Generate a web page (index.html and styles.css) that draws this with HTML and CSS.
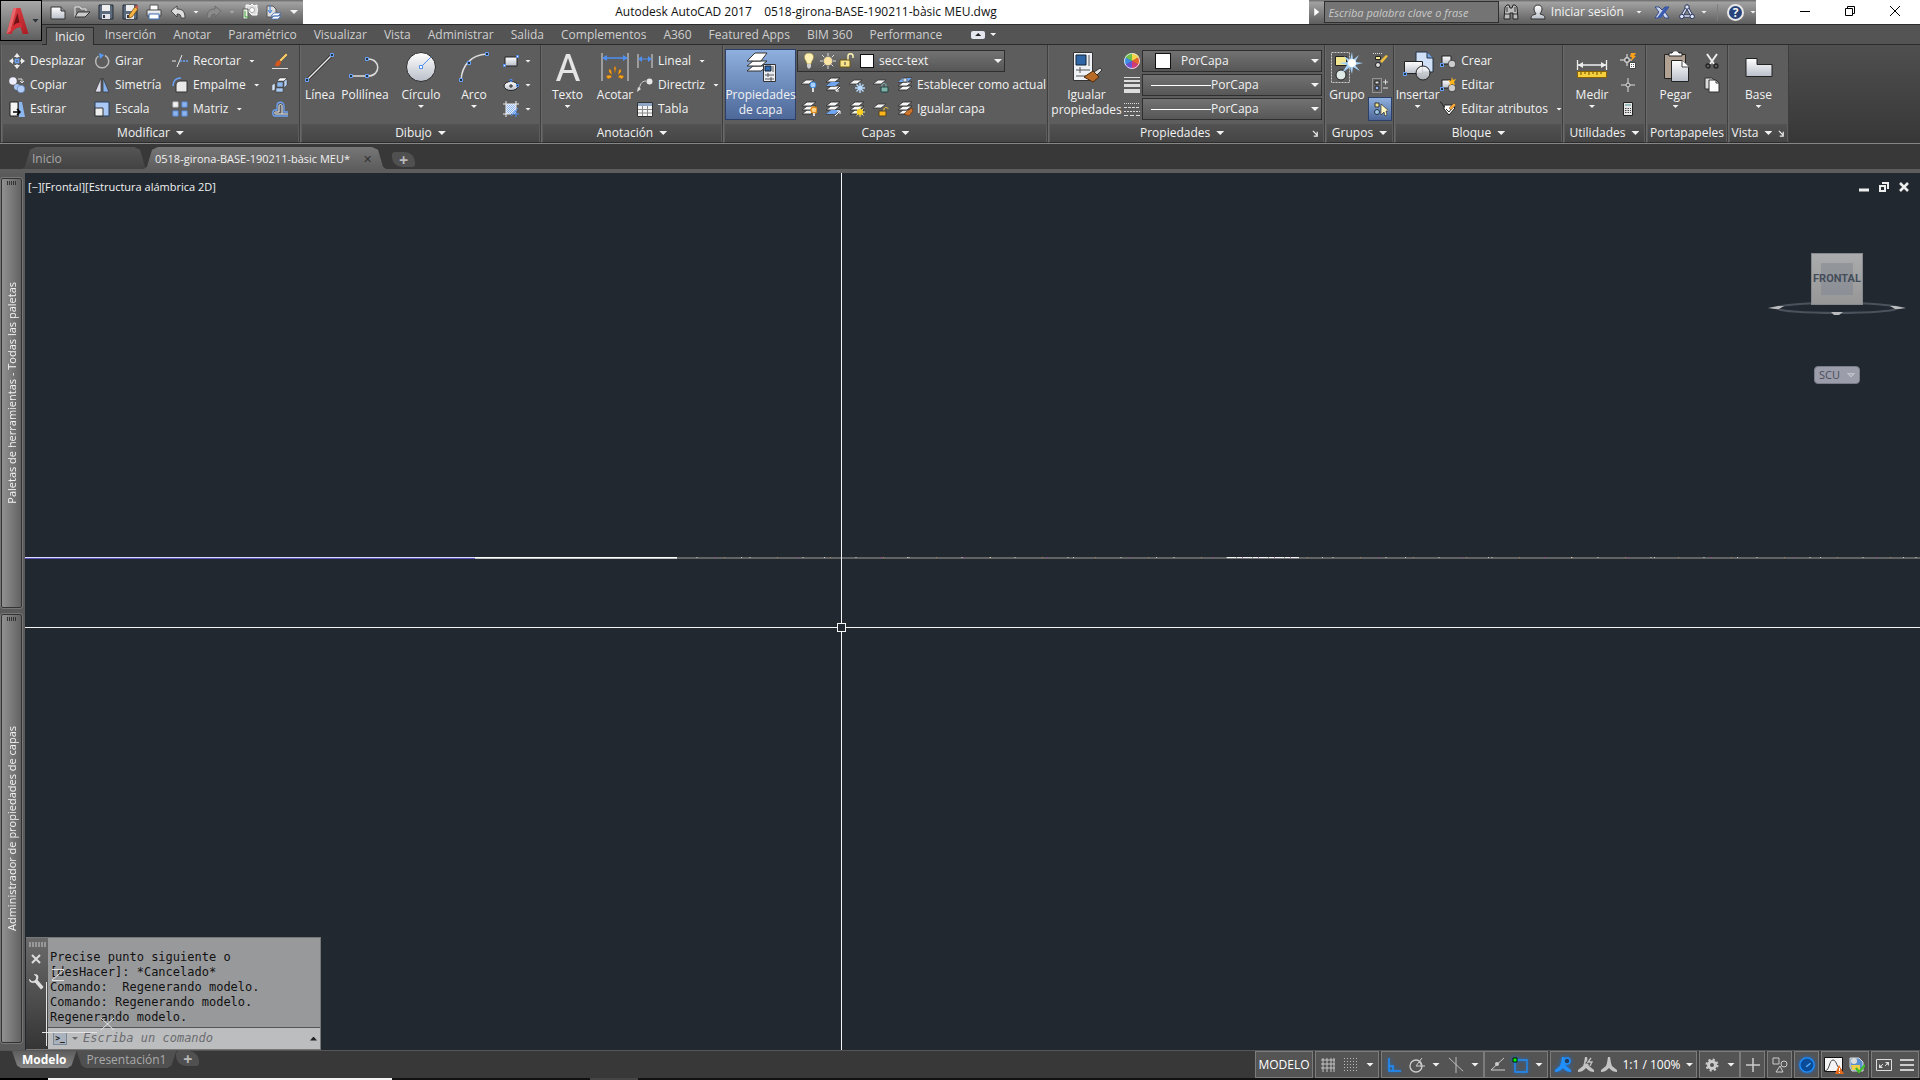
FILE: index.html
```html
<!DOCTYPE html>
<html lang="es">
<head>
<meta charset="utf-8">
<title>Autodesk AutoCAD 2017 - 0518-girona-BASE-190211-bàsic MEU.dwg</title>
<link rel="stylesheet" href="styles.css">
</head>
<body>
<svg class="sprite" aria-hidden="true">
  <defs>
    <linearGradient id="silver" x1="0" y1="0" x2="0" y2="1"><stop offset="0" stop-color="#fff"/><stop offset="1" stop-color="#b9bfc9"/></linearGradient>
    <linearGradient id="red" x1="0" y1="0" x2="1" y2="1"><stop offset="0" stop-color="#e8434a"/><stop offset="1" stop-color="#a81d22"/></linearGradient>
    <pattern id="hatch" width="2" height="2" patternUnits="userSpaceOnUse"><rect width="2" height="2" fill="#e8f0fc"/><path d="M0 0l2 2" stroke="#6f9fe8" stroke-width=".8"/></pattern>
  </defs>
  <symbol id="logo" viewBox="0 0 24 28"><path d="M8 1h7l8 26h-6l-2-7c-4 0-7 2-9 7H1L8 1z" fill="url(#red)"/><path d="M12 6l-5 15c2-3 5-5 7-5L12 6z" fill="#6e1216"/><path d="M8 1h3L5 24l-4 3L8 1z" fill="#f1797c" opacity=".7"/><path d="M6 20c4-4 7-5 9-4l2 4c-4 0-8 1-11 5z" fill="#d22d34"/></symbol>
  <symbol id="new" viewBox="0 0 16 16"><path d="M1 3h10l4 4v8H1z" fill="url(#silver)" stroke="#333"/><path d="M11 3v4h4" fill="#999" stroke="#333"/></symbol>
  <symbol id="open" viewBox="0 0 16 16"><path d="M1 13V3h5l1 2h5v2" fill="#777" stroke="#e8e8e8"/><path d="M1 13L4 8h12l-5 5z" fill="#ccc" stroke="#333"/></symbol>
  <symbol id="save" viewBox="0 0 16 16"><path d="M1 1h14v14H1z" fill="#5b6a7c" stroke="#242c36"/><path d="M4 1h8v6H4z" fill="#eee"/><path d="M4 10h8v5H4z" fill="#dfe3e8"/><path d="M5 11h2v3H5z" fill="#334"/></symbol>
  <symbol id="saveas" viewBox="0 0 16 16"><use href="#save"/><path d="M7 11l6-8 3 2-6 8-3 1z" fill="#f4b545" stroke="#704400" stroke-width=".7"/><path d="M13 3l1-2 3 2-1 2z" fill="#d9534a"/></symbol>
  <symbol id="print" viewBox="0 0 16 16"><path d="M4 1h8v6H4z" fill="#fff" stroke="#555"/><path d="M1 6h14v6H1z" fill="url(#silver)" stroke="#444"/><path d="M3 10h10v5H3z" fill="#fff" stroke="#3e6fb5"/></symbol>
  <symbol id="undo" viewBox="0 0 16 16"><path d="M1 7l6-5v3c6 0 8 3 8 9h-4c0-3-1-4-4-4v3z" fill="#ddd" stroke="#333" stroke-width=".8"/></symbol>
  <symbol id="redo" viewBox="0 0 16 16"><path d="M15 7L9 2v3C3 5 1 8 1 14h4c0-3 1-4 4-4v3z" fill="#8b8b8b" stroke="#666" stroke-width=".8"/></symbol>
  <symbol id="sheets" viewBox="0 0 16 16"><path d="M4 1h3l1 1 2-2 2 2 3-1v3l1 2-1 2v3h-5l-2-2-4-4z" fill="#ddd" stroke="#fff"/><path d="M1 5h5v10H1z" fill="#e8f5e0" stroke="#5a5a5a"/><path d="M3 7v6h4" stroke="#3c9a3c" fill="none"/><circle cx="10" cy="6" r="2.500" fill="#fff" stroke="#aaa"/></symbol>
  <symbol id="layerqa" viewBox="0 0 16 16"><path d="M1 2h6l3 3v8H1z" fill="#ddd" stroke="#555"/><path d="M4 1v7m-2-2l2 3 2-3" stroke="#3f7edb" fill="none"/><path d="M8 9h7l-3 3H5zM8 12h7l-3 3H5z" fill="#fff" stroke="#3a6db8" stroke-width=".8"/></symbol>
  <symbol id="binoc" viewBox="0 0 16 16"><path d="M2 3l2-2h2l1 3h2l1-3h2l2 2 1 12h-5V9H7v6H1z" fill="#bbb" stroke="#222"/><path d="M2 10h5M9 10h5M4 3v5M12 3v5" stroke="#333"/></symbol>
  <symbol id="user" viewBox="0 0 16 16"><path d="M8 1c3 0 4 2 4 4 0 3-2 4-2 5 3 1 5 1 5 5H1c0-4 2-4 5-5 0-1-2-2-2-5 0-2 1-4 4-4z" fill="url(#silver)" stroke="#333"/></symbol>
  <symbol id="exch" viewBox="0 0 16 16"><path d="M1 3h4l3 3 3-3h4l-4 5 4 6h-4l-3-4-3 4H1l4-6z" fill="#cfd8ee" stroke="#334a86"/><path d="M11 3h4L7 14H3z" fill="#3b5bb0"/></symbol>
  <symbol id="a360" viewBox="0 0 16 16"><path d="M8 3l5 9H3z" fill="none" stroke="#27335c" stroke-width="3"/><path d="M8 3l5 9H3z" fill="none" stroke="#dfe5f5" stroke-width="1.500"/><g fill="#dfe5f5" stroke="#27335c"><circle cx="8" cy="3" r="2.200"/><circle cx="2.800" cy="12.500" r="2.200"/><circle cx="13.200" cy="12.500" r="2.200"/></g></symbol>
  <symbol id="layers" viewBox="0 0 16 16"><g fill="#f6f6f6" stroke="#2f2f2f" stroke-width=".9"><path d="M1 13l5-4h9l-5 4z"/><path d="M1 9l5-4h9l-5 4z"/><path d="M1 5l5-4h9l-5 4z"/></g></symbol>
  <symbol id="layer" viewBox="0 0 16 16"><path d="M0 7l5-4h8L8 7z" fill="#f6f6f6" stroke="#333" stroke-width=".8"/></symbol>
  <symbol id="move" viewBox="0 0 16 16"><path d="M8 0l3 4H5zM8 16l3-4H5zM0 8l4-3v6zM16 8l-4-3v6z" fill="#eee"/><path d="M8 3v2M8 11v2M3 8h2M11 8h2" stroke="#eee"/><path d="M6.500 6.500h3v3h-3z" fill="none" stroke="#6aa2f8" stroke-width="1.500"/></symbol>
  <symbol id="copy" viewBox="0 0 16 16"><circle cx="4" cy="4" r="3.800" fill="#eef"/><circle cx="8" cy="10" r="3" fill="#a8c6f4"/><circle cx="12" cy="12" r="3.800" fill="#b4cdf5" stroke="#4a74b4" stroke-width=".5"/><path d="M9 2h4v4m-2-2l2 2 2-2" fill="none" stroke="#ddd"/></symbol>
  <symbol id="stretch" viewBox="0 0 16 16"><path d="M10 1h3l3 15h-6z" fill="#8cb7ee"/><path d="M1 1h8v14H1z" fill="#f4f4f4" stroke="#222"/><path d="M4 11h7M8 8l3 3-3 3" stroke="#000" stroke-width="1.500" fill="none"/></symbol>
  <symbol id="rotate" viewBox="0 0 16 16"><path d="M11 2.500A6.500 6.500 0 1 1 4.500 3" fill="none" stroke="#b9b9b9" stroke-width="1.500"/><path d="M5 0l5 2-4 4" fill="#5a9af5"/></symbol>
  <symbol id="mirror" viewBox="0 0 16 16"><path d="M7 1v14H1z" fill="#dde" stroke="#333" stroke-width=".7"/><path d="M9 1v14h6z" fill="#84b1ee" stroke="#333" stroke-width=".7"/></symbol>
  <symbol id="scale" viewBox="0 0 16 16"><path d="M1 1h14v14H1z" fill="#a9c8f5" stroke="#28405f"/><path d="M1 7h8v8H1z" fill="#eee" stroke="#333"/></symbol>
  <symbol id="trim" viewBox="0 0 16 16"><path d="M0 8h4M5 14l5-12" stroke="#e8e8e8"/><path d="M8 8h2m1 0h2m1 0h2" stroke="#6aa2f8" stroke-width="1.300"/></symbol>
  <symbol id="fillet" viewBox="0 0 16 16"><path d="M4 15V9c0-4 2-5 5-5h6v11z" fill="#e9e9e9" stroke="#333"/><path d="M1 9c0-5 3-8 8-8" fill="none" stroke="#6aa2f8" stroke-width="1.600"/></symbol>
  <symbol id="array" viewBox="0 0 16 16"><path d="M1 1h5v5H1z" fill="#f4f4f4" stroke="#ccc"/><path d="M10 1h5v5h-5zM1 10h5v5H1zM10 10h5v5h-5z" fill="#8fb4ea" stroke="#5e93e6"/></symbol>
  <symbol id="brush" viewBox="0 0 16 16"><path d="M14 0l2 2-7 7-2-2z" fill="#f0c66a" stroke="#333" stroke-width=".5"/><path d="M7 7l2 2c0 4-3 5-6 4 1-3 1-5 4-6z" fill="#d4571b"/><path d="M0 15.500h16" stroke="#ddd"/></symbol>
  <symbol id="explode" viewBox="0 0 16 16"><g stroke="#333" stroke-width=".5"><path d="M5 4l3-3h7l-3 3z" fill="#fff"/><path d="M5 5h6v5H5z" fill="#8db8ee"/><path d="M12 4l3-2v6l-3 3z" fill="#b8d3f5"/><path d="M0 8l3-2v7l-3 1z" fill="#d8e6fa"/><path d="M4 11h7v4H4z" fill="#a9c9f2"/></g></symbol>
  <symbol id="offset" viewBox="0 0 16 16"><path d="M16 11h-4V5c0-5-7-5-7 0v4H3c-3 0-3 6 0 6h13" fill="none" stroke="#6aa2f8" stroke-width="1.300"/><path d="M16 13H4c-2 0-2-2 0-2h3V5c0-2 3-2 3 0v8" fill="none" stroke="#eee"/></symbol>
  <symbol id="line" viewBox="0 0 32 32"><path d="M3 29L28 4" stroke="#222" stroke-width="3"/><path d="M3 29L28 4" stroke="#eee" stroke-width="1.500"/><path d="M1.500 27.500h3v3h-3zM26.500 2.500h3v3h-3z" fill="#234" stroke="#6aa2f8"/></symbol>
  <symbol id="pline" viewBox="0 0 32 32"><path d="M2 25h17c13 0 13-17 0-17" fill="none" stroke="#ddd" stroke-width="1.500"/><path d="M.500 23.500h3v3h-3zM16.500 23.500h3v3h-3zM16.500 6.500h3v3h-3z" fill="#234" stroke="#6aa2f8"/></symbol>
  <symbol id="circle" viewBox="0 0 32 32"><circle cx="16" cy="16" r="14.500" fill="url(#silver)" stroke="#2a2a2a"/><path d="M16 16L26 6" stroke="#4f8ff0"/><path d="M14.500 14.500h3v3h-3z" fill="#fff" stroke="#4f8ff0"/></symbol>
  <symbol id="arc" viewBox="0 0 32 32"><path d="M3 29C4 15 12 4 29 3" fill="none" stroke="#ddd" stroke-width="1.500"/><path d="M1.500 27.500h3v3h-3zM9.500 10.500h3v3h-3zM27.500 1.500h3v3h-3z" fill="#234" stroke="#6aa2f8"/></symbol>
  <symbol id="rect" viewBox="0 0 16 16"><path d="M2 4h12v9H2z" fill="url(#silver)" stroke="#222"/><path d="M.500 11.500h2v2h-2zM13.500 2.500h2v2h-2z" fill="#fff" stroke="#4f8ff0"/></symbol>
  <symbol id="ellipse" viewBox="0 0 16 16"><ellipse cx="8" cy="9" rx="7" ry="4.500" fill="url(#silver)" stroke="#222"/><path d="M6 9h4M8 7v4" stroke="#222"/><path d="M7 2.500h2v2H7zM13.500 7.500h2v2h-2z" fill="#234" stroke="#4f8ff0"/></symbol>
  <symbol id="hatchi" viewBox="0 0 16 16"><path d="M3 3h10v10H3z" fill="url(#hatch)"/><path d="M3 0v16M13 0v10M0 3h16M0 13h8" stroke="#eee"/><path d="M8 15l7-8M13 10v6M10 13h6" stroke="#4f8ff0"/></symbol>
  <symbol id="text" viewBox="0 0 32 32"><path d="M4 30L14 3h4l10 27h-4l-3-8H11l-3 8zm8-11h8L16 7z" fill="#e4e4e4"/></symbol>
  <symbol id="dim" viewBox="0 0 32 32"><path d="M3 2v28M29 2v28" stroke="#ddd"/><path d="M4 7h24" stroke="#4f8ff0" stroke-width="1.500"/><path d="M3 7l5-3v6zM29 7l-5-3v6z" fill="#4f8ff0"/><g fill="#f7a51c" stroke="#a95a00" stroke-width=".4"><path d="M15 17l1-2 1 2-1 5zM10 18l2 1 1 5-3-3zM22 18l-2 1-1 5 3-3zM7 25l4-1 2 2-4 2zM25 25l-4-1-2 2 4 2z"/></g></symbol>
  <symbol id="linear" viewBox="0 0 16 16"><path d="M1 1v14M15 1v14" stroke="#ddd"/><path d="M2 6h12" stroke="#4f8ff0"/><path d="M1 6l4-3v6zM15 6l-4-3v6z" fill="#4f8ff0"/></symbol>
  <symbol id="leader" viewBox="0 0 16 16"><path d="M2 13C3 8 4 4 9 4" fill="none" stroke="#ccc"/><path d="M0 15l1-5 3 2z" fill="#ddd"/><circle cx="12.500" cy="4.500" r="3" fill="#e8e8e8"/></symbol>
  <symbol id="table" viewBox="0 0 16 16"><path d="M.500 1.500h15v14H.500z" fill="#f4f4f4" stroke="#333"/><path d="M1 2h14v3H1z" fill="#8fa7c4"/><path d="M1 8.500h14M1 12h14M5.500 5v10M10.500 5v10" stroke="#888"/></symbol>
  <symbol id="layerprop" viewBox="0 0 32 32"><g fill="#fff" stroke="#333"><path d="M2 20l6-5h14l-6 5z"/><path d="M2 15l6-5h14l-6 5z"/><path d="M2 10l8-8h12l-6 8z"/></g><path d="M18.500 13.500h12v17h-12z" fill="#e9edf3" stroke="#333"/><path d="M20 15h6v5h-6z" fill="#3168b0" stroke="#123"/><path d="M28 15v6M20 24h9M20 28h9M23 22v4M26 26v4" stroke="#555"/></symbol>
  <symbol id="bulb" viewBox="0 0 16 16"><path d="M8 0c6 0 5 6 3 8l-1 3H6L5 8C3 6 2 0 8 0z" fill="#fdf0b4" stroke="#9a8438" stroke-width=".6"/><path d="M6 11h4v3l-2 2-2-2z" fill="#ccc"/></symbol>
  <symbol id="sun" viewBox="0 0 16 16"><path d="M8 0v16M0 8h16M2 2l12 12M14 2L2 14" stroke="#ddd" stroke-dasharray="3 10 3 10"/><circle cx="8" cy="8" r="4.500" fill="#fbe4a4" stroke="#777" stroke-width=".5"/></symbol>
  <symbol id="unlock" viewBox="0 0 16 16"><path d="M9 7V3c0-3 5-3 5 0v2" fill="none" stroke="#fff3b5" stroke-width="1.500"/><path d="M1 7h10v7H1z" fill="#f9e48e" stroke="#6d5a10"/><path d="M6 9v3" stroke="#333"/></symbol>
  <symbol id="layoff" viewBox="0 0 16 16"><use href="#layer"/><circle cx="12" cy="8" r="3" fill="#a9d2ff" stroke="#3e84d8"/><path d="M11 11h2v4h-2z" fill="#ddd"/></symbol>
  <symbol id="layiso" viewBox="0 0 16 16"><use href="#layers"/><path d="M1 9l5-4h9l-5 4z" fill="#6fa4ee"/><path d="M15 10l-4 4m0-3v3h3" stroke="#fff" fill="none"/></symbol>
  <symbol id="layfrz" viewBox="0 0 16 16"><use href="#layer"/><path d="M11 6v10M6 11h10M7.500 7.500l7 7M14.500 7.500l-7 7" stroke="#b8dcff" stroke-width="1.400"/></symbol>
  <symbol id="laylck" viewBox="0 0 16 16"><use href="#layer"/><path d="M9 10V8c0-2 4-2 4 0v2" fill="none" stroke="#8bb"/><path d="M8 10h7v5H8z" fill="#7fb2a8" stroke="#244"/></symbol>
  <symbol id="laycur" viewBox="0 0 16 16"><use href="#layers"/><path d="M1 5l5-4h9l-5 4z" fill="#6fa4ee"/><circle cx="8" cy="3" r="2" fill="#ddd" stroke="#333" stroke-width=".5"/></symbol>
  <symbol id="layon" viewBox="0 0 16 16"><use href="#layers"/><circle cx="13" cy="9" r="3" fill="#ffd488" stroke="#e0881a" stroke-width="1.300"/><path d="M12 12h2v3h-2z" fill="#ddd"/></symbol>
  <symbol id="layuni" viewBox="0 0 16 16"><use href="#layers"/><path d="M1 13l5-4h9l-5 4z" fill="#6fa4ee"/><path d="M10 15l5-5m-3 0h3v3" stroke="#fff" fill="none"/></symbol>
  <symbol id="laythw" viewBox="0 0 16 16"><use href="#layers"/><path d="M11 6v10M6 11h10M7.500 7.500l7 7M14.500 7.500l-7 7" stroke="#ffe98a"/><circle cx="11" cy="11" r="3" fill="#ffd21f"/></symbol>
  <symbol id="layulk" viewBox="0 0 16 16"><use href="#layer"/><path d="M11 10V8c0-2 4-2 4 0" fill="none" stroke="#fc3"/><path d="M6 10h7v5H6z" fill="#fbb41a" stroke="#542"/></symbol>
  <symbol id="laymch" viewBox="0 0 16 16"><use href="#layers"/><path d="M15 7l1 3-4 5-5-2 3-3z" fill="#c9752d" stroke="#5c2f0b" stroke-width=".6"/></symbol>
  <symbol id="match" viewBox="0 0 32 32"><path d="M2.500 1.500h19v28h-19z" fill="#eef1f5" stroke="#333"/><path d="M5 4h10v10H5z" fill="#2f66a8" stroke="#123"/><path d="M18 4v11M5 19h14M5 25h10M9 16v6" stroke="#555"/><path d="M29 17l2 2-5 5-3-3z" fill="#ddd" stroke="#333"/><path d="M22 20l6 6-6 5-9-5z" fill="#b86b26" stroke="#4e2808"/></symbol>
  <symbol id="wheel" viewBox="0 0 16 16"><path d="M8 8V0a8 8 0 0 1 7 4z" fill="#f7d646"/><path d="M8 8l7-4a8 8 0 0 1 0 8z" fill="#e8642c"/><path d="M8 8l7 4a8 8 0 0 1-7 4z" fill="#d43a78"/><path d="M8 8v8a8 8 0 0 1-7-4z" fill="#6d4fd0"/><path d="M8 8l-7 4a8 8 0 0 1 0-8z" fill="#3b8fe8"/><path d="M8 8L1 4a8 8 0 0 1 7-4z" fill="#6cc04a"/><circle cx="8" cy="8" r="7.500" fill="none" stroke="#ddd"/></symbol>
  <symbol id="weight" viewBox="0 0 16 16"><path d="M0 .500h16" stroke="#ddd"/><path d="M0 4h16" stroke="#ddd" stroke-width="2"/><path d="M0 8.500h16" stroke="#ddd" stroke-width="3"/><path d="M0 14h16" stroke="#ddd" stroke-width="4"/></symbol>
  <symbol id="ltype" viewBox="0 0 16 16"><g stroke="#ddd"><path d="M0 2.500h16" stroke-dasharray="1 1"/><path d="M0 6.500h16" stroke-dasharray="3 1"/><path d="M0 10.500h16" stroke-dasharray="2 1"/><path d="M0 14.500h16" stroke-dasharray="4 2"/></g></symbol>
  <symbol id="group" viewBox="0 0 32 32"><path d="M.500 1.500h18v30H.500z" fill="none" stroke="#ccc" stroke-dasharray="2 1"/><path d="M4.500 5.500h11v9h-11z" fill="#f3e78f" stroke="#222"/><circle cx="10" cy="24" r="5" fill="#dfe9e6" stroke="#222"/><path d="M21 1l1 8 6-5-4 7 8 1-8 2 5 6-7-4-1 7-2-7-8 6 5-8-8-2 9-1-4-6 6 4z" fill="#a7d3fb"/><circle cx="21" cy="12" r="4" fill="#fff"/></symbol>
  <symbol id="gedit" viewBox="0 0 16 16"><path d="M1 .500h9" stroke="#ddd" stroke-dasharray="1 1"/><path d="M3.500 3.500h5v3h-5z" fill="#f3e78f" stroke="#222"/><circle cx="6" cy="12" r="2.500" fill="#ddd" stroke="#222"/><path d="M8 8l6-6 2 1-6 7z" fill="#f0c040"/></symbol>
  <symbol id="gadd" viewBox="0 0 16 16"><path d="M.500 1.500h9v14h-9z" fill="none" stroke="#ccc" stroke-dasharray="1 1"/><path d="M3 4h4v3H3z" fill="#ddd" stroke="#222"/><circle cx="5" cy="11" r="2" fill="#8fb8f4" stroke="#222"/><path d="M11 5h5M13.500 2.500v5M11 11h5" stroke="#ddd"/></symbol>
  <symbol id="gsel" viewBox="0 0 16 16"><path d="M3 2h4v4H3z" fill="#f3e78f" stroke="#333"/><circle cx="5" cy="11" r="2.500" fill="#9ec5e6" stroke="#234"/><path d="M9 3v11l3-3 1 4 2-1-1-4h3z" fill="#fff6c0" stroke="#333" stroke-width=".7"/></symbol>
  <symbol id="insert" viewBox="0 0 32 32"><path d="M14 1h11l6 6v14H14z" fill="#cfe0f7" stroke="#234"/><path d="M25 1v6h6" fill="#7aa5df" stroke="#234"/><path d="M2.500 10.500h18v12h-18z" fill="url(#silver)" stroke="#222"/><circle cx="21" cy="22" r="7" fill="url(#silver)" fill-opacity=".85" stroke="#222"/><path d="M1.500 21.500h3v3h-3z" fill="#234" stroke="#6aa2f8"/></symbol>
  <symbol id="block" viewBox="0 0 16 16"><path d="M2 3h9v8H2z" fill="url(#silver)" stroke="#222"/><circle cx="12" cy="11" r="3.800" fill="#ccc" stroke="#222" stroke-width=".7"/><path d="M.500 10.500h3v3h-3z" fill="#234" stroke="#6aa2f8"/></symbol>
  <symbol id="bedit" viewBox="0 0 16 16"><use href="#block"/><path d="M12 0l1 3 3-1-2 3 1 3-3-1-3 2 1-3-2-3 3 1z" fill="#fbb41a"/></symbol>
  <symbol id="battr" viewBox="0 0 16 16"><path d="M4 4h8l3 3-6 7-5-6z" fill="#fff" stroke="#222"/><path d="M0 1c3 0 2 5 5 5M6 8l3 3 3-4" fill="none" stroke="#222"/><path d="M9 7l5-5 2 2-5 5z" fill="#f3a93a" stroke="#532" stroke-width=".5"/></symbol>
  <symbol id="measure" viewBox="0 0 32 32"><path d="M1.500 9v10M30.500 9v10M2 14h28" stroke="#eee" stroke-width="1.300"/><path d="M2 14l5-3v6zM30 14l-5-3v6z" fill="#eee"/><path d="M1.500 20.500h29v6h-29z" fill="#f6cf3e" stroke="#8b6200"/><path d="M5 21v3M9 21v2M13 21v3M17 21v2M21 21v3M25 21v2" stroke="#6b4a00"/></symbol>
  <symbol id="quick" viewBox="0 0 16 16"><path d="M7 1v12M0 7h12" stroke="#eee"/><path d="M5 5h4v4H5z" fill="#444" stroke="#eee"/><path d="M11 0h5l-2 3h2l-5 5 1-4h-2z" fill="#fba11a"/><path d="M9.500 9.500h6v6h-6z" fill="#fff" stroke="#444"/><path d="M11 11.500h4M11 13.500h4" stroke="#555" stroke-dasharray="1 1"/></symbol>
  <symbol id="point" viewBox="0 0 16 16"><path d="M8 1v14M1 8h14" stroke="#ddd"/><circle cx="8" cy="8" r="2" fill="#555" stroke="#ddd"/></symbol>
  <symbol id="calc" viewBox="0 0 16 16"><path d="M3.500 1.500h9v13h-9z" fill="#e6e6e6" stroke="#222"/><path d="M5 3h6v2H5z" fill="#9bb"/><path d="M5 7.500h6M5 9.500h6M5 11.500h6" stroke="#444" stroke-dasharray="1.500 1"/></symbol>
  <symbol id="paste" viewBox="0 0 32 32"><path d="M4.500 3.500h21v24h-21z" fill="#b0a192" stroke="#222"/><path d="M9 5V2h3c1-3 6-3 7 0h3v3z" fill="#fff" stroke="#222"/><path d="M11.500 9.500h11l6 6v15h-17z" fill="url(#silver)" stroke="#222"/><path d="M22 9v7h7" fill="#fff" stroke="#444"/></symbol>
  <symbol id="cut" viewBox="0 0 16 16"><path d="M3 1l7 10M13 1L6 11" stroke="#eee" stroke-width="2"/><circle cx="4" cy="13" r="2" fill="none" stroke="#222" stroke-width="1.300"/><circle cx="12" cy="13" r="2" fill="none" stroke="#222" stroke-width="1.300"/></symbol>
  <symbol id="clipcopy" viewBox="0 0 16 16"><path d="M1 1h7l2 2v9H1z" fill="#ddd" stroke="#333"/><path d="M5 3h7l3 3v9H5z" fill="#fff" stroke="#333"/><path d="M12 3v3h3" fill="none" stroke="#333"/></symbol>
  <symbol id="base" viewBox="0 0 32 32"><path d="M3 7.500h11v6h15v12H3z" fill="url(#silver)" stroke="#222"/></symbol>
  <symbol id="wrench" viewBox="0 0 16 16"><path d="M1 4l3 3 3-1 1-3-3-3c5-1 7 2 5 6l6 7-3 3-6-7C3 10 0 8 1 4z" fill="#ddd" stroke="#333" stroke-width=".5"/></symbol>
  <symbol id="cross" viewBox="0 0 10 10"><path d="M1 1l8 8M9 1L1 9" stroke="#ddd" stroke-width="2"/></symbol>
  <symbol id="grid" viewBox="0 0 16 16"><path d="M3 1v14M7 1v14M11 1v14M1 3h14M1 7h14M1 11h14M14 1v14" stroke="#c4c4c4"/></symbol>
  <symbol id="snap" viewBox="0 0 16 16"><g stroke="#bbb" stroke-dasharray="1 2"><path d="M1 1.500h14M1 4.500h14M1 7.500h14M1 10.500h14M1 13.500h14"/></g></symbol>
  <symbol id="ortho" viewBox="0 0 16 16"><path d="M3 1v13h12M3 9h4v5" fill="none" stroke="#1f90ff" stroke-width="1.500"/></symbol>
  <symbol id="polar" viewBox="0 0 16 16"><circle cx="7" cy="9" r="6" fill="none" stroke="#ccc" stroke-width="1.300"/><path d="M7 9h9M7 9l6-8M10 5c2 1 2 3 2 5" stroke="#ccc" fill="none"/></symbol>
  <symbol id="iso" viewBox="0 0 18 18"><path d="M1 1l16 15M9 0v18" stroke="#ccc"/></symbol>
  <symbol id="otrack" viewBox="0 0 16 16"><path d="M15 1L2 13h14" fill="none" stroke="#ccc"/><circle cx="8" cy="7" r="2" fill="#ccc"/></symbol>
  <symbol id="osnap" viewBox="0 0 16 16"><path d="M3 3h12v12H3z" fill="none" stroke="#1f90ff" stroke-width="1.300"/><path d="M1 1h4v4H1z" fill="#0f0" stroke="#010"/></symbol>
  <symbol id="ann" viewBox="0 0 16 16"><path d="M7 0h2l1 6 1 3 5 4v2c-3 0-5-1-8-4-3 3-5 4-8 4v-2l5-4 1-3z" fill="currentColor"/></symbol>
  <symbol id="annvis" viewBox="0 0 16 16"><use href="#ann"/><circle cx="12" cy="4" r="3" fill="#223d5c" stroke="currentColor" stroke-width="1.500"/></symbol>
  <symbol id="annauto" viewBox="0 0 16 16"><use href="#ann"/><path d="M13 1l-3 4h4l-2 4" fill="none" stroke="#545454" stroke-width="3"/><path d="M13 1l-3 4h4l-2 4" fill="none" stroke="currentColor" stroke-width="1.300"/></symbol>
  <symbol id="gear" viewBox="0 0 16 16"><circle cx="8" cy="8" r="3.500" fill="none" stroke="#ccc" stroke-width="3"/><circle cx="8" cy="8" r="5.500" fill="none" stroke="#ccc" stroke-width="2" stroke-dasharray="2.160 2.160"/></symbol>
  <symbol id="plus" viewBox="0 0 16 16"><path d="M8 1v14M1 8h14" stroke="#ccc" stroke-width="1.500"/></symbol>
  <symbol id="shapes" viewBox="0 0 16 16"><path d="M1 1h6v6H1zM8 9l3 6H4z" fill="none" stroke="#ccc"/><circle cx="12" cy="7" r="3" fill="none" stroke="#ccc"/></symbol>
  <symbol id="perf" viewBox="0 0 18 18"><circle cx="9" cy="9" r="8" fill="#0a4c98" stroke="#1f90ff" stroke-width="1.500"/><path d="M8 11l5-4" stroke="#5ab4ff" stroke-width="1.500"/></symbol>
  <symbol id="monitor" viewBox="0 0 20 18"><path d="M.500 1.500h18v14H.500z" fill="#f4f4f4" stroke="#111"/><path d="M1 15C6 14 5 4 9 4s3 8 9 10" fill="none" stroke="#444"/><path d="M15 9l5 9H11z" fill="#e46a1c"/><path d="M15.500 12v3m0 1v1" stroke="#fff"/></symbol>
  <symbol id="cadstd" viewBox="0 0 16 16"><path d="M1 1h9l4 4v9H3L1 10z" fill="#5b8fcf" stroke="#ddd"/><circle cx="5" cy="4" r="3" fill="#ddd"/><path d="M2 8h9v5H3z" fill="#f0ce4a"/><path d="M7 11l3 4 6-7" fill="none" stroke="#3ebd28" stroke-width="2.200"/></symbol>
  <symbol id="full" viewBox="0 0 16 16"><path d="M.500 2.500h15v11H.500z" fill="none" stroke="#ddd"/><path d="M3 11V7l4 4zM13 5v4L9 5z" fill="#ddd"/><path d="M4 10l3-3M12 6L9 9" stroke="#ddd"/></symbol>
  <symbol id="menu" viewBox="0 0 16 16"><path d="M1 3h14M1 8h14M1 13h14" stroke="#ccc" stroke-width="2"/></symbol>
  <symbol id="launch" viewBox="0 0 8 8"><path d="M1 1l5 5M6 2v5H2" fill="none" stroke="#eee" stroke-width="1.300"/></symbol>
</svg>

<header class="top">
  <button class="app" aria-label="Menú de la aplicación"><svg class="applogo"><use href="#logo"/></svg><i class="caret dark"></i></button>
  <div class="titlebar">
    <div class="qat">
      <button aria-label="Nuevo"><svg><use href="#new"/></svg></button>
      <button aria-label="Abrir"><svg><use href="#open"/></svg></button>
      <button aria-label="Guardar"><svg><use href="#save"/></svg></button>
      <button aria-label="Guardar como"><svg><use href="#saveas"/></svg></button>
      <button aria-label="Trazar"><svg><use href="#print"/></svg></button>
      <button aria-label="Deshacer"><svg><use href="#undo"/></svg></button>
      <button class="drop" aria-label="Historial deshacer"><i class="caret"></i></button>
      <button aria-label="Rehacer"><svg><use href="#redo"/></svg></button>
      <button class="drop" aria-label="Historial rehacer"><i class="caret dim"></i></button>
      <button aria-label="Conjunto de planos"><svg><use href="#sheets"/></svg></button>
      <button aria-label="Capa actual"><svg><use href="#layerqa"/></svg></button>
      <button class="more" aria-label="Personalizar"><i class="caret big"></i></button>
    </div>
    <h1>Autodesk AutoCAD 2017 &nbsp;&nbsp; 0518-girona-BASE-190211-bàsic MEU.dwg</h1>
    <div class="info">
      <button class="expand" aria-label="Contraer"><i class="tri"></i></button>
      <input class="search" type="text" aria-label="Buscar" placeholder="Escriba palabra clave o frase">
      <button class="tool" aria-label="Buscar ahora"><svg><use href="#binoc"/></svg></button>
      <button class="tool sign"><svg><use href="#user"/></svg>Iniciar sesión<i class="caret"></i></button>
      <button class="tool" aria-label="Exchange Apps"><svg><use href="#exch"/></svg></button>
      <button class="tool withdrop" aria-label="Autodesk A360"><svg><use href="#a360"/></svg><i class="caret"></i></button>
      <button class="tool withdrop help" aria-label="Ayuda"><b>?</b><i class="caret"></i></button>
    </div>
    <div class="winctl">
      <button aria-label="Minimizar"><svg viewBox="0 0 10 10"><path d="M0 5.500h10"/></svg></button>
      <button aria-label="Restaurar"><svg viewBox="0 0 10 10"><path d="M.500 2.500h7v7h-7zM2.500 2V.500h7v7H8"/></svg></button>
      <button aria-label="Cerrar"><svg viewBox="0 0 10 10"><path d="M0 0l10 10M10 0L0 10"/></svg></button>
    </div>
  </div>
  <nav class="tabs">
    <button class="on">Inicio</button><button>Inserción</button><button>Anotar</button><button>Paramétrico</button><button>Visualizar</button><button>Vista</button><button>Administrar</button><button>Salida</button><button>Complementos</button><button>A360</button><button>Featured Apps</button><button>BIM 360</button><button>Performance</button>
    <button class="mini" aria-label="Minimizar cinta"><span><i class="up"></i></span><i class="caret"></i></button>
  </nav>
</header>

<section class="ribbon">
  <section class="panel modify">
    <div class="body">
      <div class="col"><button><svg><use href="#move"/></svg>Desplazar</button><button><svg><use href="#copy"/></svg>Copiar</button><button><svg><use href="#stretch"/></svg>Estirar</button></div>
      <div class="col"><button><svg><use href="#rotate"/></svg>Girar</button><button><svg><use href="#mirror"/></svg>Simetría</button><button><svg><use href="#scale"/></svg>Escala</button></div>
      <div class="col"><button><svg><use href="#trim"/></svg>Recortar<i class="caret"></i></button><button><svg><use href="#fillet"/></svg>Empalme<i class="caret"></i></button><button><svg><use href="#array"/></svg>Matriz<i class="caret"></i></button></div>
      <div class="col"><button aria-label="Borrar"><svg><use href="#brush"/></svg></button><button aria-label="Descomponer"><svg><use href="#explode"/></svg></button><button aria-label="Desfase"><svg><use href="#offset"/></svg></button></div>
    </div>
    <h2>Modificar<i class="caret big"></i></h2>
  </section>
  <section class="panel draw">
    <div class="body">
      <button class="large"><svg><use href="#line"/></svg>Línea</button>
      <button class="large"><svg><use href="#pline"/></svg>Polilínea</button>
      <button class="large"><svg><use href="#circle"/></svg>Círculo<i class="caret"></i></button>
      <button class="large"><svg><use href="#arc"/></svg>Arco<i class="caret"></i></button>
      <div class="col"><button aria-label="Rectángulo"><svg><use href="#rect"/></svg><i class="caret"></i></button><button aria-label="Elipse"><svg><use href="#ellipse"/></svg><i class="caret"></i></button><button aria-label="Sombreado"><svg><use href="#hatchi"/></svg><i class="caret"></i></button></div>
    </div>
    <h2>Dibujo<i class="caret big"></i></h2>
  </section>
  <section class="panel annot">
    <div class="body">
      <button class="large"><svg><use href="#text"/></svg>Texto<i class="caret"></i></button>
      <button class="large"><svg><use href="#dim"/></svg>Acotar</button>
      <div class="col"><button><svg><use href="#linear"/></svg>Lineal<i class="caret"></i></button><button><svg><use href="#leader"/></svg>Directriz<i class="caret"></i></button><button><svg><use href="#table"/></svg>Tabla</button></div>
    </div>
    <h2>Anotación<i class="caret big"></i></h2>
  </section>
  <section class="panel layers">
    <div class="body">
      <button class="large pressed"><svg><use href="#layerprop"/></svg>Propiedades<br>de capa</button>
      <div class="col">
        <div class="combo"><svg><use href="#bulb"/></svg><svg><use href="#sun"/></svg><svg><use href="#unlock"/></svg><span class="swatch"></span><select aria-label="Capa"><option>secc-text</option></select><i class="caret big"></i></div>
        <div class="icons"><button aria-label="Desactivar"><svg><use href="#layoff"/></svg></button><button aria-label="Aislar"><svg><use href="#layiso"/></svg></button><button aria-label="Inutilizar"><svg><use href="#layfrz"/></svg></button><button aria-label="Bloquear"><svg><use href="#laylck"/></svg></button><button><svg><use href="#laycur"/></svg>Establecer como actual</button></div>
        <div class="icons"><button aria-label="Activar todas"><svg><use href="#layon"/></svg></button><button aria-label="Desaislar"><svg><use href="#layuni"/></svg></button><button aria-label="Reutilizar todas"><svg><use href="#laythw"/></svg></button><button aria-label="Desbloquear"><svg><use href="#layulk"/></svg></button><button><svg><use href="#laymch"/></svg>Igualar capa</button></div>
      </div>
    </div>
    <h2>Capas<i class="caret big"></i></h2>
  </section>
  <section class="panel props">
    <div class="body">
      <button class="large"><svg><use href="#match"/></svg>Igualar<br>propiedades</button>
      <div class="col">
        <div class="prop"><svg><use href="#wheel"/></svg><div class="combo"><span class="swatch"></span><select aria-label="Color"><option>PorCapa</option></select><i class="caret big"></i></div></div>
        <div class="prop"><svg><use href="#weight"/></svg><div class="combo"><span class="rule"></span><select aria-label="Grosor de línea"><option>PorCapa</option></select><i class="caret big"></i></div></div>
        <div class="prop"><svg><use href="#ltype"/></svg><div class="combo"><span class="rule"></span><select aria-label="Tipo de línea"><option>PorCapa</option></select><i class="caret big"></i></div></div>
      </div>
    </div>
    <h2>Propiedades<i class="caret big"></i><svg class="launch"><use href="#launch"/></svg></h2>
  </section>
  <section class="panel groups">
    <div class="body">
      <button class="large"><svg><use href="#group"/></svg>Grupo</button>
      <div class="col"><button aria-label="Editar grupo"><svg><use href="#gedit"/></svg></button><button aria-label="Añadir o eliminar"><svg><use href="#gadd"/></svg></button><button class="pressed" aria-label="Selección de grupo"><svg><use href="#gsel"/></svg></button></div>
    </div>
    <h2>Grupos<i class="caret big"></i></h2>
  </section>
  <section class="panel blocks">
    <div class="body">
      <button class="large"><svg><use href="#insert"/></svg>Insertar<i class="caret"></i></button>
      <div class="col"><button><svg><use href="#block"/></svg>Crear</button><button><svg><use href="#bedit"/></svg>Editar</button><button><svg><use href="#battr"/></svg>Editar atributos<i class="caret"></i></button></div>
    </div>
    <h2>Bloque<i class="caret big"></i></h2>
  </section>
  <section class="panel utils">
    <div class="body">
      <button class="large"><svg><use href="#measure"/></svg>Medir<i class="caret"></i></button>
      <div class="col"><button aria-label="Selección rápida"><svg><use href="#quick"/></svg></button><button aria-label="ID de punto"><svg><use href="#point"/></svg></button><button aria-label="Calculadora"><svg><use href="#calc"/></svg></button></div>
    </div>
    <h2>Utilidades<i class="caret big"></i></h2>
  </section>
  <section class="panel clip">
    <div class="body">
      <button class="large"><svg><use href="#paste"/></svg>Pegar<i class="caret"></i></button>
      <div class="col"><button aria-label="Cortar"><svg><use href="#cut"/></svg></button><button aria-label="Copiar"><svg><use href="#clipcopy"/></svg></button></div>
    </div>
    <h2>Portapapeles</h2>
  </section>
  <section class="panel view">
    <div class="body"><button class="large"><svg><use href="#base"/></svg>Base<i class="caret"></i></button></div>
    <h2>Vista<i class="caret big"></i><svg class="launch"><use href="#launch"/></svg></h2>
  </section>
</section>

<nav class="files">
  <button class="file start">Inicio</button>
  <button class="file on">0518-girona-BASE-190211-bàsic MEU*<span>✕</span></button>
  <button class="file add" aria-label="Nuevo dibujo">+</button>
</nav>

<main class="work">
  <aside class="palettes">
    <div class="palette"><i class="grip"></i><span>Paletas de herramientas - Todas las paletas</span></div>
    <div class="palette"><i class="grip"></i><span>Administrador de propiedades de capas</span></div>
  </aside>
  <div class="canvas">
    <div class="vplabel">[−][Frontal][Estructura alámbrica 2D]</div>
    <div class="mdi">
      <button aria-label="Minimizar dibujo"><svg viewBox="0 0 10 10"><path d="M0 8h10" stroke-width="3"/></svg></button>
      <button aria-label="Restaurar dibujo"><svg viewBox="0 0 10 10"><path d="M1 4h5v5H1zM3 1h6v6" stroke-width="2"/></svg></button>
      <button aria-label="Cerrar dibujo"><svg viewBox="0 0 10 10"><path d="M1 1l8 8M9 1L1 9" stroke-width="2.500"/></svg></button>
    </div>
    <div class="cube">
      <svg class="compass" viewBox="0 0 140 14"><ellipse cx="70" cy="7" rx="61" ry="5" fill="none" stroke="#4b525b" stroke-width="2"/><path d="M1 7l10-2h6l-5 3H8zM139 7l-10-2h-6l5 3h4zM64 11h12l-4 3h-5z" fill="#b9bbbd"/></svg>
      <button class="face">FRONTAL</button>
      <button class="ucs">SCU<svg viewBox="0 0 8 5"><path d="M.500.500h7L4 4z" fill="#aeb0ba" stroke="#c2c3cc"/></svg></button>
    </div>
    <i class="drawn blue"></i><i class="drawn white"></i><i class="drawn mixed"></i><i class="drawn bright"></i>
    <i class="hair h"></i><i class="hair v"></i><i class="pick"></i>
    <section class="cmd">
      <div class="cmdbar"><i class="grip"></i><button aria-label="Cerrar"><svg class="x"><use href="#cross"/></svg></button><button aria-label="Personalizar"><svg><use href="#wrench"/></svg></button></div>
      <pre>Precise punto siguiente o
[desHacer]: *Cancelado*
Comando:  Regenerando modelo.
Comando: Regenerando modelo.
Regenerando modelo.</pre>
      <div class="entry"><button class="prompt" aria-label="Comandos recientes">&gt;_</button><i class="caret grey"></i><input type="text" aria-label="Comando" placeholder="Escriba un comando"><i class="up"></i></div>
    </section>
    <svg class="ucsicon" viewBox="0 0 80 90"><g fill="none" stroke="#e4e4e4"><path d="M0 72.500h55M4.500 22v64M59 58l13 12M72 58L59 70M10 9.500h12M22 10L10 20M10 20.500h12"/></g></svg>
  </div>
</main>

<footer class="bottom">
  <nav class="layouts"><button class="on">Modelo</button><button>Presentación1</button><button class="add" aria-label="Nueva presentación">+</button></nav>
  <div class="status">
    <div class="cell model"><button>MODELO</button></div>
    <div class="cell"><button aria-label="Rejilla"><svg><use href="#grid"/></svg></button><button aria-label="Forzado"><svg><use href="#snap"/></svg></button><button class="dd" aria-label="Opciones de forzado"><i class="caret big"></i></button></div>
    <div class="cell join"><button aria-label="Orto"><svg class="glow"><use href="#ortho"/></svg></button><button aria-label="Polar"><svg><use href="#polar"/></svg></button><button class="dd" aria-label="Ángulos"><i class="caret big"></i></button><button aria-label="Dibujo isométrico"><svg><use href="#iso"/></svg></button><button class="dd" aria-label="Isoplano"><i class="caret big"></i></button></div>
    <div class="cell"><button aria-label="Rastreo"><svg><use href="#otrack"/></svg></button><button aria-label="Referencia a objetos"><svg class="glow"><use href="#osnap"/></svg></button><button class="dd" aria-label="Modos de referencia"><i class="caret big"></i></button></div>
    <div class="cell"><button aria-label="Visibilidad de anotación"><svg class="glow"><use href="#annvis"/></svg></button><button aria-label="Escala automática"><svg><use href="#annauto"/></svg></button><button aria-label="Escala de anotación"><svg><use href="#ann"/></svg></button><button class="scale">1:1 / 100%<i class="caret big"></i></button></div>
    <div class="cell join"><button aria-label="Espacio de trabajo"><svg><use href="#gear"/></svg></button><button class="dd" aria-label="Espacios de trabajo"><i class="caret big"></i></button></div>
    <div class="cell"><button aria-label="Supervisor"><svg><use href="#plus"/></svg></button></div>
    <div class="cell"><button aria-label="Aislar objetos"><svg><use href="#shapes"/></svg></button></div>
    <div class="cell"><button aria-label="Rendimiento"><svg class="glow"><use href="#perf"/></svg></button></div>
    <div class="cell"><button aria-label="Variables de sistema"><svg class="wide"><use href="#monitor"/></svg></button><button aria-label="Normas CAD"><svg><use href="#cadstd"/></svg></button></div>
    <div class="cell"><button aria-label="Pantalla limpia"><svg><use href="#full"/></svg></button><button aria-label="Personalización"><svg><use href="#menu"/></svg></button></div>
  </div>
</footer>
<div class="taskbar"></div>
</body>
</html>
```
FILE: styles.css
```css
* { box-sizing: border-box; }
body {
  margin: 0;
  min-height: 100vh;
  display: flex;
  flex-direction: column;
  background: #383838;
  color: #f2f2f2;
  font: 12px/16px "Open Sans", "Noto Sans", sans-serif;
  overflow: hidden;
}
button, input, select {
  font: inherit;
  color: inherit;
  background: none;
  border: 0;
  padding: 0;
  margin: 0;
  white-space: nowrap;
}
svg { width: 16px; height: 16px; flex: none; display: block; }
.sprite { position: absolute; width: 0; height: 0; }

.caret, .up { flex: none; width: 6px; height: 3px; background: #f2f2f2; clip-path: polygon(0 0, 100% 0, 50% 100%); }
.caret.big { width: 8px; height: 4px; }
.caret.dark { background: #2d3238; width: 7px; height: 4px; }
.caret.dim { background: #a8a8a8; }
.caret.grey { background: #6a6a6a; }
.up { background: #222; clip-path: polygon(50% 0, 100% 100%, 0 100%); }
.tri { width: 5px; height: 8px; background: #fff; clip-path: polygon(0 0, 100% 50%, 0 100%); }

/* Title bar and ribbon tabs */
.top { display: grid; grid-template-columns: 42px 1fr; grid-template-rows: 25px 20px; background: #545454; }
.app {
  grid-row: 1 / 3;
  height: 41px;
  display: flex;
  align-items: center;
  gap: 2px;
  padding-left: 4px;
  border: 1px solid #000;
  background: linear-gradient(#a8a8a8, #5f5f5f);
}
.applogo { width: 25px; height: 28px; }
.titlebar { display: flex; background: #fff; border-bottom: 1px solid #2b2b2b; }
.qat, .info { display: flex; align-items: center; background: linear-gradient(#757575 1px, #a2a2a2 2px, #5d5d5d); }
.qat { width: 261px; padding-left: 4px; }
.qat button { width: 24px; display: flex; justify-content: center; }
.qat .drop { width: 12px; }
.qat .more { width: 16px; }
.titlebar h1 { flex: 1; margin: 0; font-size: 12px; font-weight: 400; line-height: 23px; text-align: center; color: #111; white-space: nowrap; }
.info { width: 447px; }
.info .expand { width: 16px; display: flex; justify-content: center; }
.search { width: 180px; height: 22px; padding-left: 3px; border: 1px solid #2f2f2f; background: #747474; font-style: italic; font-size: 11px; }
.search::placeholder { color: #c8c8c8; opacity: 1; }
.tool { display: flex; align-items: center; margin-left: 4px; }
.tool.sign { gap: 5px; width: 116px; margin-left: 11px; }
.sign .caret { margin-left: auto; }
.sign + .tool { margin-left: 12px; }
.tool.withdrop { gap: 6px; margin-left: 9px; }
.tool.help { border-left: 1px solid #7d7d7d; padding-left: 9px; margin-left: 10px; }
.help b { width: 17px; height: 17px; border-radius: 50%; background: #27437a; border: 2px solid #e8e8e8; line-height: 13px; text-align: center; }
.winctl { width: 164px; display: flex; padding-left: 26px; }
.winctl button { width: 45px; height: 22px; display: flex; align-items: center; justify-content: center; }
.winctl svg { width: 10px; height: 10px; fill: none; stroke: #000; }
.tabs { display: flex; align-items: stretch; gap: 1px; padding-left: 4px; border-bottom: 1px solid #2b2b2b; color: #cfcfcf; }
.tabs button { padding: 0 8px; line-height: 18px; }
.tabs .on { margin: 2px 2px -1px 0; line-height: 15px; color: #eee; background: #5d5d5d; border: 1px solid #2b2b2b; border-bottom: 0; }
.mini { display: flex; align-items: center; gap: 5px; margin-left: 12px; }
.mini span { width: 14px; height: 8px; border-radius: 2px; background: #e4e8ee; display: flex; align-items: center; justify-content: center; }

/* Ribbon */
.ribbon { display: flex; height: 99px; padding-left: 1px; background: linear-gradient(#4f4f4f, #373737); border-bottom: 1px solid #868686; }
.panel { flex: none; display: flex; flex-direction: column; white-space: nowrap; border-right: 1px solid #3e3e3e; border-left: 1px solid #696969; border-bottom: 1px solid #2b2b2b; background: #5d5d5d; }
.body { flex: 1; display: flex; padding-top: 4px; }
.panel h2 { margin: 0 1px; height: 18px; display: flex; align-items: center; justify-content: center; gap: 6px; font-size: 12px; font-weight: 400; line-height: 18px; background: linear-gradient(#525252, #454545); }
.launch { width: 7px; height: 7px; }
.col { display: flex; flex-direction: column; }
.col button { display: flex; align-items: center; gap: 5px; height: 24px; }
.col button .caret { margin-left: 3px; }
.large { display: flex; flex-direction: column; align-items: center; line-height: 15px; padding-top: 2px; text-align: center; height: 71px; }
.large svg { width: 32px; height: 32px; margin-bottom: 4px; }
.large .caret { margin-top: 3px; }
.pressed { background: linear-gradient(#8fb0df, #4d6899); border: 1px solid #2c3f68; }
.combo { display: flex; align-items: center; height: 22px; border: 1px solid #2e2e2e; background: linear-gradient(#727272, #575757); padding-right: 2px; }
.combo select { flex: 1; min-width: 0; appearance: none; }
.combo option { color: #111; }
.swatch { width: 14px; height: 14px; background: #fff; border: 1px solid #111; }
.rule { width: 60px; height: 1px; background: #fff; margin-left: 8px; }

.modify { width: 299px; }
.modify .body { display: grid; grid-template-columns: 85px 78px 100px 18px; padding-left: 7px; }
.draw { width: 241px; }
.draw .large:nth-of-type(1) { width: 38px; }
.draw .large:nth-of-type(2) { width: 52px; }
.draw .large:nth-of-type(3) { width: 60px; }
.draw .large:nth-of-type(4) { width: 46px; }
.draw .col { padding-left: 6px; }
.draw .col .caret { margin-left: 1px; }
.annot { width: 182px; }
.annot .large { width: 44px; }
.annot .large:first-child { width: 51px; }
.layers { width: 325px; }
.layers .large { width: 71px; padding-top: 1px; margin: 0 1px; }
.layers .combo { width: 208px; margin: 1px 0; gap: 3px; padding-left: 3px; }
.layers .swatch { margin: 0 2px; }
.icons { display: flex; gap: 8px; padding-left: 4px; }
.icons button { gap: 4px; }
.props { width: 277px; }
.props .large { width: 75px; }
.props .col { flex: 1; gap: 2px; padding-top: 1px; padding-right: 2px; }
.prop { display: flex; align-items: center; gap: 2px; }
.prop .combo { flex: 1; }
.prop .swatch { width: 16px; height: 16px; margin: 0 10px 0 12px; }
.launch { margin-left: auto; }
.props h2 { padding: 0 4px 0 90px; }
.groups { width: 69px; }
.groups .large { width: 42px; }
.groups .col button { width: 24px; justify-content: center; }
.blocks { width: 169px; }
.blocks .large { width: 47px; }
.utils { width: 83px; }
.utils .large { width: 56px; }
.clip { width: 82px; }
.clip .large { width: 57px; }
.view { width: 61px; }
.view .large { width: 59px; }
.view h2 { padding: 0 4px; }

/* Drawing tabs */
.files { display: flex; align-items: flex-end; height: 29px; padding-left: 22px; border-bottom: 4px solid #5d5d5d; }
.file { height: 22px; line-height: 23px; text-align: left; background: linear-gradient(#555, #434343); clip-path: polygon(0 100%, 3px 90%, 8px 12%, 14px 0, calc(100% - 14px) 0, calc(100% - 8px) 12%, calc(100% - 3px) 90%, 100% 100%); }
.start { width: 126px; padding-left: 10px; color: #a8a8a8; }
.file.on { display: flex; width: 242px; margin-left: -4px; padding-left: 11px; font-size: 11px; background: linear-gradient(#777, #5d5d5d); }
.file.on span { margin-left: auto; padding-right: 14px; color: #333; }
.file.add, .layouts .add { text-align: center; color: #bbb; font-size: 16px; font-weight: 700; background: #505050; border-radius: 3px 10px 3px 10px; clip-path: none; }
.file.add { width: 23px; height: 15px; line-height: 14px; margin: 0 0 2px 6px; }

/* Work area */
.work { flex: 1; display: flex; min-height: 0; }
.palettes { width: 25px; background: #5a5a5a; padding: 5px 3px 7px 1px; display: flex; flex-direction: column; gap: 6px; }
.palette { flex: 1; display: flex; align-items: center; justify-content: center; position: relative; border: 1px solid #333; outline: 1px solid #777; border-radius: 2px; background: linear-gradient(90deg, #919191, #626262); }
.palette span { writing-mode: vertical-rl; transform: rotate(180deg); white-space: nowrap; font-size: 11px; }
.grip { position: absolute; top: 2px; left: 5px; width: 10px; height: 4px; background: repeating-linear-gradient(90deg, #333 0 1px, transparent 1px 2px); }
.canvas { flex: 1; position: relative; background: #212830; overflow: hidden; }
.vplabel { position: absolute; left: 3px; top: 6px; font-size: 11px; }
.mdi { position: absolute; right: 11px; top: 9px; display: flex; gap: 10px; }
.mdi svg { width: 10px; height: 10px; fill: none; stroke: #eee; }
.cube { position: absolute; top: 80px; right: 13px; width: 140px; height: 131px; display: flex; flex-direction: column; align-items: center; justify-content: space-between; }
.compass { position: absolute; top: 48px; left: 0; width: 140px; height: 14px; }
.face { position: relative; width: 52px; height: 52px; border: 1px solid #85888c; color: #454d59; font: 700 11px/16px Roboto, sans-serif; background: linear-gradient(#93979c, #8c9096) center / 32px 32px no-repeat, linear-gradient(#aaabac, #979797); }
.ucs { width: 46px; height: 18px; display: flex; align-items: center; justify-content: space-between; padding: 0 4px; border: 1px solid #7a7c88; border-radius: 4px; background: #9b9dab; color: #4a4c57; font-size: 11px; }
.ucs svg { width: 8px; height: 5px; }
.drawn { position: absolute; top: 384px; height: 2px; }
.blue { left: 0; width: 450px; background: linear-gradient(#dcdcff 50%, #5a53b5 50%); }
.white { left: 450px; width: 202px; background: linear-gradient(#fff 50%, #bfc4c2 50%); }
.mixed {
  left: 652px;
  right: 0;
  background:
    repeating-linear-gradient(90deg, transparent 0 37px, #8a4a8a 37px 39px, transparent 39px 64px, #ccc 64px 65px, transparent 65px 83px) 0 0 / 100% 1px no-repeat,
    repeating-linear-gradient(90deg, transparent 0 19px, #999 19px 21px, transparent 21px 47px, #a8864a 47px 48px, transparent 48px 53px) 0 0 / 100% 1px no-repeat,
    #606264;
}
.bright { left: 1202px; width: 72px; background: linear-gradient(transparent 50%, #77797b 50%), repeating-linear-gradient(90deg, #f2f2f2 0 9px, #999 9px 10px, #f2f2f2 10px 15px, #b7b 15px 16px); }
.hair { position: absolute; background: #f4f4f4; }
.hair.h { left: 0; right: 0; top: 454px; height: 1px; }
.hair.v { top: 0; bottom: 0; left: 816px; width: 1px; }
.pick { position: absolute; left: 812px; top: 450px; width: 9px; height: 9px; border: 1px solid #f4f4f4; background: #212830; }

/* Command window */
.cmd { position: absolute; left: 1px; bottom: 0; width: 295px; display: grid; grid-template-columns: 22px 1fr; border: 1px solid #777; border-left: 0; background: #98999b; color: #111; font: 12px/15px "DejaVu Sans Mono", monospace; }
.cmdbar { grid-row: 1 / 3; position: relative; display: flex; flex-direction: column; align-items: center; gap: 10px; padding: 16px 2px 0 0; background: linear-gradient(#6a6a6a, #353535); }
.cmdbar .x { width: 10px; height: 10px; }
.cmdbar .grip { left: 3px; top: 4px; width: 17px; height: 5px; background: repeating-linear-gradient(90deg, #999 0 2px, transparent 2px 3px); }
.cmd pre { margin: 0; padding: 12px 2px 2px; font: inherit; }
.entry { height: 22px; display: flex; align-items: center; gap: 5px; padding: 0 3px 0 5px; border-top: 1px solid #555; background: #bcbdbf; }
.entry input { flex: 1; min-width: 0; font-style: italic; }
.entry input::placeholder { color: #6a6b6e; opacity: 1; }
.entry .up { width: 7px; height: 4px; }
.prompt { width: 14px; height: 13px; border: 1px solid #7b8794; background: #aab3bd; font-size: 8px; line-height: 10px; font-weight: 700; }
.ucsicon { position: absolute; left: 17px; bottom: 0; width: 80px; height: 90px; pointer-events: none; }

/* Layout tabs and status bar */
.bottom { height: 28px; display: flex; justify-content: space-between; align-items: flex-start; border-top: 1px solid #555; }
.layouts { display: flex; padding-left: 12px; }
.layouts button { height: 17px; line-height: 15px; padding: 0 10px; color: #aaa; background: #505050; clip-path: polygon(0 0, 100% 0, calc(100% - 5px) 85%, calc(100% - 9px) 100%, 9px 100%, 5px 85%); }
.layouts .on { color: #fff; font-weight: 700; background: linear-gradient(#5d5d5d, #828282); }
.layouts .add { width: 23px; height: 15px; line-height: 14px; padding: 0; clip-path: none; }
.status { display: flex; gap: 2px; height: 27px; padding-right: 1px; background: #414141; color: #c4c4c4; }
.cell { display: flex; align-items: center; border: 1px solid #7c7c7c; background: #545454; }
.cell.join { margin-right: -2px; }
.cell button { width: 23px; height: 24px; display: flex; align-items: center; justify-content: center; }
.cell .dd { width: 16px; }
.cell .scale { width: 76px; gap: 5px; color: #fff; }
.cell.model button { width: 56px; color: #fff; }
.glow { color: #1f90ff; filter: drop-shadow(0 0 2px #1670d8); }
.wide { width: 20px; height: 18px; }
.taskbar { height: 2px; background: linear-gradient(90deg, #000 48px, #f4f4f4 48px 392px, #111 392px 590px, #444 590px 638px, #111 638px); }
```
